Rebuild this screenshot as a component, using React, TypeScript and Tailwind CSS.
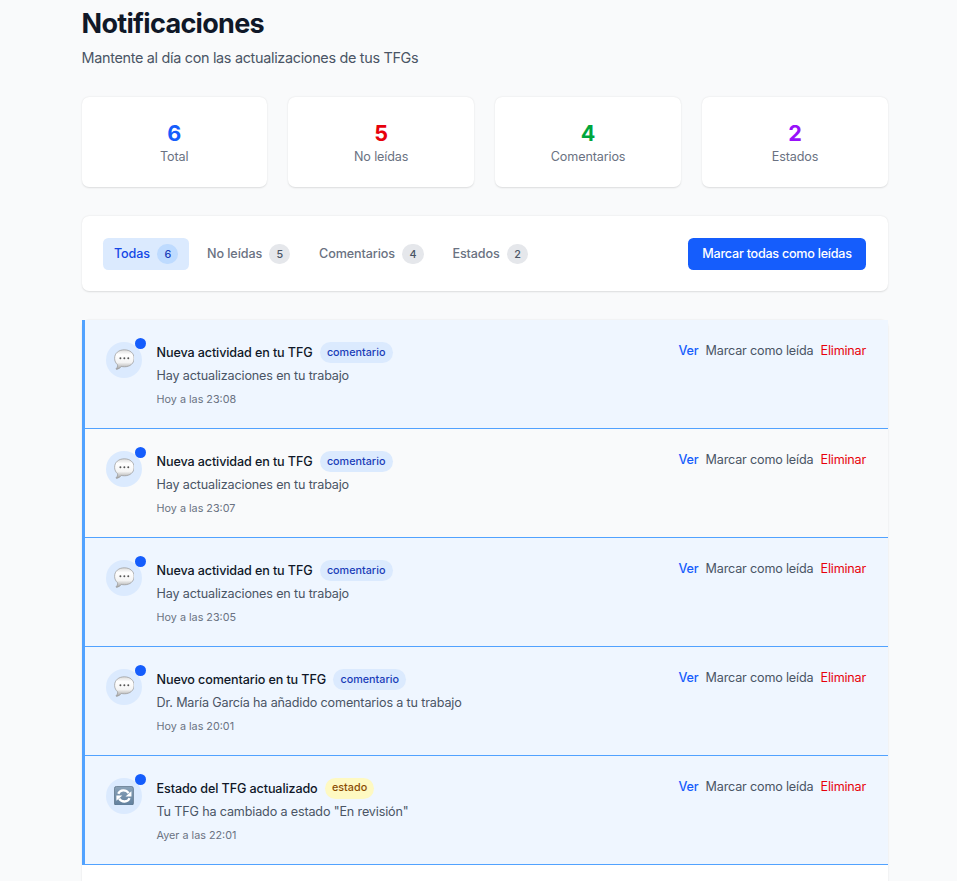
import React from "react";

const stats = [
  { label: "Total", value: 6, color: "text-blue-600" },
  { label: "No leídas", value: 5, color: "text-red-600" },
  { label: "Comentarios", value: 4, color: "text-green-600" },
  { label: "Estados", value: 2, color: "text-purple-600" },
];

const tabs = [
  { label: "Todas", count: 6, active: true },
  { label: "No leídas", count: 5, active: false },
  { label: "Comentarios", count: 4, active: false },
  { label: "Estados", count: 2, active: false },
];

type Notification = {
  title: string;
  message: string;
  time: string;
  kind: "comentario" | "estado";
  highlighted?: boolean;
};

const notifications: Notification[] = [
  { title: "Nueva actividad en tu TFG", message: "Hay actualizaciones en tu trabajo", time: "Hoy a las 23:08", kind: "comentario" },
  { title: "Nueva actividad en tu TFG", message: "Hay actualizaciones en tu trabajo", time: "Hoy a las 23:07", kind: "comentario", highlighted: true },
  { title: "Nueva actividad en tu TFG", message: "Hay actualizaciones en tu trabajo", time: "Hoy a las 23:05", kind: "comentario" },
  { title: "Nuevo comentario en tu TFG", message: "Dr. María García ha añadido comentarios a tu trabajo", time: "Hoy a las 20:01", kind: "comentario" },
  { title: "Estado del TFG actualizado", message: 'Tu TFG ha cambiado a estado "En revisión"', time: "Ayer a las 22:01", kind: "estado" },
];

function SpeechBubble() {
  return (
    <svg className="size-[23px]" viewBox="0 0 20 20">
      <defs>
        <linearGradient id="bubble" x1="0" y1="0" x2="0" y2="1">
          <stop offset="0" stopColor="#dcdcdc" />
          <stop offset="0.25" stopColor="#ffffff" />
          <stop offset="0.65" stopColor="#f4f4f4" />
          <stop offset="1" stopColor="#a0a0a0" />
        </linearGradient>
      </defs>
      <path
        d="M10 .8C15.500 .8 19.400 4 19.400 9S15.500 17.200 10 17.200c-1 0-2-.1-2.900-.4C6 18.400 4 19.500 2.200 19.600c-.4 0-.4-.4-.1-.6 1-.8 1.500-2.200 1.400-3.700C1.700 13.700.6 11.600.6 9 .6 4 4.500.8 10 .8z"
        fill="url(#bubble)"
        stroke="#999"
        strokeWidth="0.7"
      />
      <circle cx="6.200" cy="9" r="0.95" fill="#555" />
      <circle cx="10" cy="9" r="0.95" fill="#555" />
      <circle cx="13.800" cy="9" r="0.95" fill="#555" />
    </svg>
  );
}

function RefreshTile() {
  return (
    <svg className="size-[22px]" viewBox="0 0 20 20">
      <defs>
        <linearGradient id="tile" x1="0" y1="0" x2="0" y2="1">
          <stop offset="0" stopColor="#8ba3b9" />
          <stop offset="1" stopColor="#607f9d" />
        </linearGradient>
      </defs>
      <rect x="0.4" y="0.4" width="19.200" height="19.200" rx="2.200" fill="url(#tile)" stroke="#5d7287" strokeWidth="0.8" />
      <path d="M4.300 7.800C6 3.400 12.200 3.200 14.800 7.200" fill="none" stroke="#fff" strokeWidth="2.300" />
      <path d="M17.600 5.200v5.300h-6z" fill="#fff" />
      <path d="M15.700 12.200C14 16.600 7.800 16.800 5.200 12.800" fill="none" stroke="#fff" strokeWidth="2.300" />
      <path d="M2.400 14.800V9.500h6z" fill="#fff" />
    </svg>
  );
}

function NotificationRow({ item }: { item: Notification }) {
  return (
    <div className={`flex items-start gap-4 border-b border-l-4 border-blue-400 p-6 ${item.highlighted ? "bg-gray-50" : "bg-blue-50"}`}>
      <div className="relative flex size-10 shrink-0 items-center justify-center rounded-full bg-blue-100">
        {item.kind === "comentario" ? <SpeechBubble /> : <RefreshTile />}
        <span className="absolute -top-1 -right-1 size-3 rounded-full bg-blue-600" />
      </div>
      <div className="flex-1">
        <div className="flex items-center gap-2">
          <h3 className="pt-[0.5px] text-sm font-medium tracking-[-0.13px] text-gray-900">{item.title}</h3>
          <span
            className={`rounded-full px-2 pt-[4.4px] pb-[3.6px] text-xs font-medium ${
              item.kind === "comentario" ? "bg-blue-100 text-blue-800" : "bg-yellow-100 text-yellow-800"
            }`}
          >
            {item.kind}
          </span>
        </div>
        <p className="mt-1 text-sm tracking-[-0.17px] text-gray-600">{item.message}</p>
        <p className="mt-[9px] -mb-px text-xs text-gray-500">{item.time}</p>
      </div>
      <div className="flex gap-2 text-sm tracking-[-0.2px]">
        <button className="font-medium text-blue-600">Ver</button>
        <button className="text-gray-600">Marcar como leída</button>
        <button className="text-red-600">Eliminar</button>
      </div>
    </div>
  );
}

export default function App() {
  return (
    <div className="h-screen overflow-hidden bg-gray-50 pt-[7.1px] pl-[81.55px] font-['Inter',sans-serif]">
      <div className="w-[895.7px] [zoom:0.9]">
        <header className="mb-8">
          <h1 className="-mb-[0.5px] pt-[0.5px] text-3xl font-bold tracking-[-0.78px] text-gray-900">Notificaciones</h1>
          <p className="mt-2 text-base tracking-[-0.34px] text-gray-600">Mantente al día con las actualizaciones de tus TFGs</p>
        </header>

        <section className="mb-8 grid grid-cols-4 gap-6">
          {stats.map((s) => (
            <div key={s.label} className="rounded-lg bg-white p-6 text-center shadow-[0_1px_2px_rgba(0,0,0,0.12)]">
              <div className={`text-2xl font-bold ${s.color}`}>{s.value}</div>
              <div className="-mb-[0.5px] pt-[0.5px] text-sm tracking-[-0.15px] text-gray-500">{s.label}</div>
            </div>
          ))}
        </section>

        <section className="mb-8 flex items-center justify-between rounded-lg bg-white px-6 pt-[24.3px] pb-[23.7px] shadow-[0_1px_2px_rgba(0,0,0,0.12)]">
          <nav className="flex gap-2">
            {tabs.map((t) => (
              <button
                key={t.label}
                className={`rounded-md px-3 py-2 text-sm font-medium tracking-[-0.11px] ${t.active ? "bg-blue-100 text-blue-700" : "text-gray-500"}`}
              >
                {t.label}
                <span className={`ml-2 rounded-full px-2 py-1 text-xs ${t.active ? "bg-blue-200 text-blue-800" : "bg-gray-200 text-gray-600"}`}>
                  {t.count}
                </span>
              </button>
            ))}
          </nav>
          <button className="rounded-md bg-blue-600 px-4 py-2 text-sm font-medium tracking-[-0.28px] text-white">Marcar todas como leídas</button>
        </section>

        <section className="rounded-lg bg-white shadow-[0_1px_2px_rgba(0,0,0,0.12)]">
          {notifications.map((n) => (
            <NotificationRow key={n.time} item={n} />
          ))}
          <div className="h-[120px]" />
        </section>
      </div>
    </div>
  );
}
